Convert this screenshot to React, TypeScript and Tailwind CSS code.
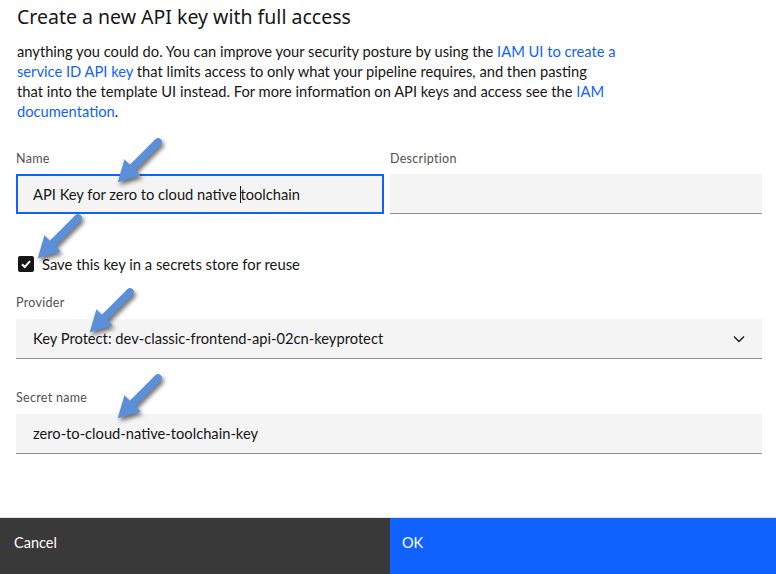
import React from 'react';

const Arrow = ({ x, y }: { x: number; y: number }) => (
    // x,y = tail of the arrow; the arrow points down-left
    <svg
        className="absolute pointer-events-none drop-shadow-[2px_3px_2px_rgba(0,0,0,0.55)]"
        style={{ left: x - 60, top: y - 10 }}
        width="70"
        height="70"
        viewBox="0 0 70 70"
    >
        <g transform="translate(60 10) rotate(135)">
            <polygon
                points="0,-3.8 36,-3.8 36,-11.5 57,0 36,11.5 36,3.8 0,3.8"
                fill="#5b8fd9"
            />
            <circle cx="0" cy="0" r="3.8" fill="#5b8fd9" />
        </g>
    </svg>
);

const Label = ({ children }: { children: React.ReactNode }) => (
    <div className="pt-px text-[12.5px] leading-4 text-[#525252] tracking-[0.3px]">{children}</div>
);

const App = () => {
    const font = { fontFamily: 'Lato, "Noto Sans", sans-serif' };

    return (
        <div className="relative w-[776px] h-[574px] bg-white flex flex-col overflow-hidden" style={font}>
            <div
                className="pl-[17px] pt-[4px] text-[19.5px] leading-[26px] text-[#161616]"
                style={{ fontFamily: '"Noto Sans", sans-serif' }}
            >
                Create a new API key with full access
            </div>

            <p className="pl-[17px] pr-[100px] mt-[11px] text-[14.7px] leading-5 text-[#161616]">
                anything you could do. You can improve your security posture by using the{' '}
                <span className="text-[#0f62fe]">IAM UI to create a</span>
                <br />
                <span className="text-[#0f62fe]">service ID API key</span> that limits access to only what your
                pipeline requires, and then pasting
                <br />
                that into the template UI instead. For more information on API keys and access see the{' '}
                <span className="text-[#0f62fe]">IAM</span>
                <br />
                <span className="text-[#0f62fe]">documentation</span>.
            </p>

            <div className="pl-4 pr-[14px] mt-[29px]">
                <div className="flex gap-[6px]">
                    <div className="w-[368px]">
                        <Label>Name</Label>
                        <div className="mt-[7px] h-10 bg-[#f4f4f4] border-2 border-[#0f62fe] flex items-center pl-[15px] text-[14.7px] text-[#161616]">
                            API Key for zero to cloud native&nbsp;
                            <span className="inline-block w-px h-[17px] bg-[#161616] -mr-px" />
                            toolchain
                        </div>
                    </div>
                    <div className="flex-1">
                        <Label>Description</Label>
                        <div className="mt-[7px] h-10 bg-[#f4f4f4] border-b border-[#8d8d8d]" />
                    </div>
                </div>

                <div className="mt-10 h-5 flex items-center gap-2 pl-[2px]">
                    <div className="w-4 h-4 rounded-[2px] bg-[#161616] flex items-center justify-center">
                        <svg width="12" height="12" viewBox="0 0 12 12">
                            <path d="M2 6.2 L4.8 9 L10 3.2" stroke="#fff" strokeWidth="2" fill="none" />
                        </svg>
                    </div>
                    <span className="text-[14.8px] text-[#161616]">Save this key in a secrets store for reuse</span>
                </div>

                <div className="mt-5">
                    <Label>Provider</Label>
                    <div className="mt-2 h-10 bg-[#f4f4f4] border-b border-[#8d8d8d] flex items-center justify-between pl-[17px] pr-[17px] text-[14.7px] text-[#161616]">
                        <span>Key Protect: dev-classic-frontend-api-02cn-keyprotect</span>
                        <svg width="12" height="8" viewBox="0 0 12 8">
                            <path d="M1 1.5 L6 6.5 L11 1.5" stroke="#161616" strokeWidth="1.3" fill="none" />
                        </svg>
                    </div>
                </div>

                <div className="mt-[30px]">
                    <Label>Secret name</Label>
                    <div className="mt-2 h-10 bg-[#f4f4f4] border-b border-[#8d8d8d] flex items-center pl-[17px] text-[14.7px] text-[#161616]">
                        zero-to-cloud-native-toolchain-key
                    </div>
                </div>
            </div>

            <div className="mt-auto h-[57px] flex border-t border-[#e0e0e0]">
                <div className="w-[390px] bg-[#393939] text-white text-[14.5px] pl-[14px] pt-[14px]">Cancel</div>
                <div className="flex-1 bg-[#0f62fe] text-white text-[14.5px] pl-[12px] pt-[14px]">OK</div>
            </div>

            <Arrow x={158} y={142} />
            <Arrow x={78} y={218} />
            <Arrow x={130} y={292} />
            <Arrow x={158} y={378} />
        </div>
    );
};

export default App;
